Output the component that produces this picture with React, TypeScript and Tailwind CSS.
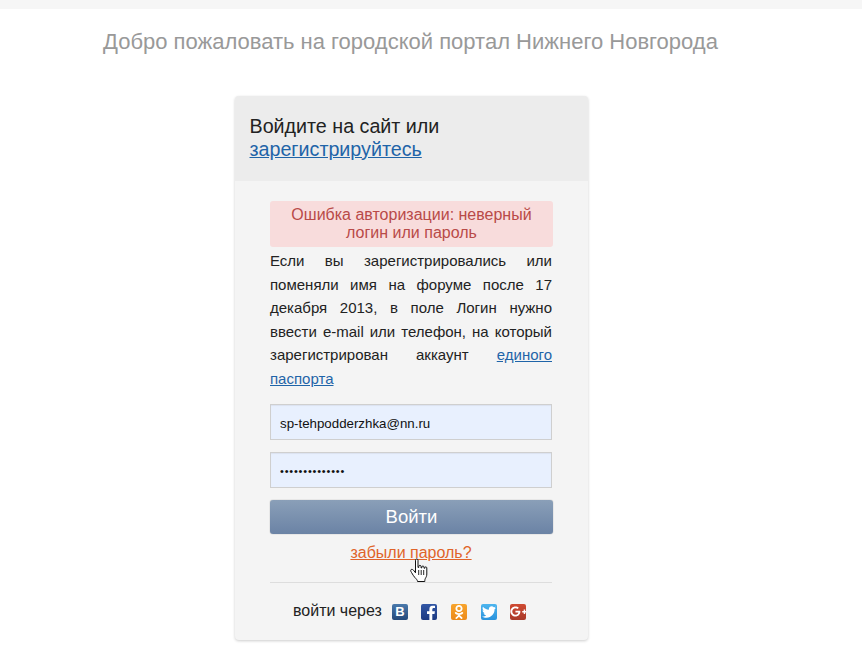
import { FaFacebookF, FaGooglePlusG, FaOdnoklassniki, FaTwitter } from "react-icons/fa";

function SocialIcon({ className, children }: { className: string; children: React.ReactNode }) {
  return (
    <a href="#" className={`flex h-4 w-4 items-center justify-center overflow-hidden rounded-[2px] text-white ${className}`}>
      {children}
    </a>
  );
}

function HandCursor() {
  return (
    <svg className="absolute left-[410px] top-[558px]" width="20" height="25" viewBox="0 0 20 25">
      <path
        d="M5.500 2.200c0-1.700 2.500-1.700 2.500 0v7.300l.8-.1V8.300c0-1.300 2.200-1.300 2.200 0v1.500l.8.100V9c0-1.300 2.200-1.300 2.200 0v1.200l.7.100V9.800c0-1.200 2.100-1.200 2.100 0v6.200c0 2-.6 3-1.300 4.200-.5.900-.7 1.700-.7 3.300H7.500c-.1-1.600-1.200-2.500-2.500-3.800-1.300-1.400-2.300-3.300-3.500-5.200-.8-1.200-1.100-2.300-.4-2.900.8-.7 2.100 0 3 1.300l1.400 1.900V2.200z"
        fill="#fff"
        stroke="#111"
        strokeWidth="1"
        strokeLinejoin="round"
      />
      <path d="M8.700 12v5M11.200 12v5M13.700 12v5" stroke="#111" strokeWidth=".9" />
    </svg>
  );
}

export default function App() {
  return (
    <div className="relative min-h-[672px] bg-white font-['Liberation_Sans',Arial,sans-serif]">
      <div className="h-[9px] bg-[#f6f6f6]" />

      <h1 className="mt-[19px] pl-[103px] text-[22px] leading-[28px] font-normal text-[#999999]">
        Добро пожаловать на городской портал Нижнего Новгорода
      </h1>

      <div className="mt-[40px] ml-[235px] w-[353px] overflow-hidden rounded-[4px] bg-[#f4f4f4] shadow-[0_1px_3px_rgba(0,0,0,0.2)]">
        <div className="h-[85px] bg-[#ececec] pl-[14.500px] pr-[15px] pt-[19px] text-[19.700px] leading-[23px] text-[#222222]">
          Войдите на сайт или
          <br />
          <a href="#" className="text-[#1f64a8] underline">зарегистрируйтесь</a>
        </div>

        <div className="h-[459px] pt-[20px] pl-[35px] pr-[35px]">
          <div className="h-[46px] rounded-[3px] bg-[#f8dcdc] px-[10px] pt-[5px] text-center text-[16px] leading-[18px] text-[#b94a48]">
            Ошибка авторизации: неверный логин или пароль
          </div>

          <p className="mt-[2px] h-[142px] w-[282px] text-justify text-[15px] leading-[23.600px] text-[#222222]">
            Если вы зарегистрировались или поменяли имя на форуме после 17 декабря 2013, в поле Логин нужно ввести e-mail или телефон, на который зарегистрирован аккаунт{" "}
            <a href="#" className="text-[#1f64a8] underline">единого паспорта</a>
          </p>

          <input
            readOnly
            value="sp-tehpodderzhka@nn.ru"
            className="mt-[13px] block h-[36px] w-[282px] border border-[#cfcfcf] bg-[#e8f0fe] pl-[9px] pr-[8px] pt-[2px] text-[13.300px] text-[#111111] shadow-[inset_0_1px_1px_rgba(0,0,0,0.06)] outline-none"
          />
          <input
            readOnly
            type="password"
            value="12345678901234"
            className="mt-[12px] block h-[36px] w-[282px] border border-[#cfcfcf] bg-[#e8f0fe] pl-[9px] pr-[8px] pt-[2px] text-[11px] tracking-[0.8px] text-[#111111] shadow-[inset_0_1px_1px_rgba(0,0,0,0.06)] outline-none"
          />

          <button className="mt-[12px] block h-[34px] w-[283px] rounded-[3px] bg-gradient-to-b from-[#8a9fb8] to-[#6b83a5] text-[18.500px] text-white shadow-[0_0_1px_rgba(0,0,0,0.5)]">
            Войти
          </button>

          <div className="mt-[10px] w-[282px] text-center text-[16px] leading-[18px]">
            <a href="#" className="text-[#e0642a] underline">забыли пароль?</a>
          </div>

          <div className="mt-[20px] flex h-[58px] w-[282px] items-center border-t border-[#dddddd] pl-[23px] text-[16px] text-[#222222]">
            <span className="mr-[10px] -translate-y-[1px]">войти через</span>
            <div className="flex items-center gap-[13.550px]">
              <SocialIcon className="bg-gradient-to-b from-[#4a79ab] to-[#24497a]">
                <span className="text-[13px] leading-none font-bold">В</span>
              </SocialIcon>
              <SocialIcon className="bg-gradient-to-b from-[#3257a5] to-[#1d3a82]">
                <FaFacebookF className="h-[15px] w-[15px] translate-x-[1.500px] translate-y-[1.500px]" />
              </SocialIcon>
              <SocialIcon className="bg-gradient-to-b from-[#f7a42c] to-[#ec8a1a]">
                <FaOdnoklassniki className="h-[14px] w-[14px]" />
              </SocialIcon>
              <SocialIcon className="bg-gradient-to-b from-[#4db5ee] to-[#2a93dd]">
                <FaTwitter className="h-[14px] w-[14px]" />
              </SocialIcon>
              <SocialIcon className="bg-gradient-to-b from-[#cf4a32] to-[#a93a2a]">
                <FaGooglePlusG className="h-[17px] w-[17px] shrink-0" />
              </SocialIcon>
            </div>
          </div>
        </div>
      </div>

      <HandCursor />
    </div>
  );
}
